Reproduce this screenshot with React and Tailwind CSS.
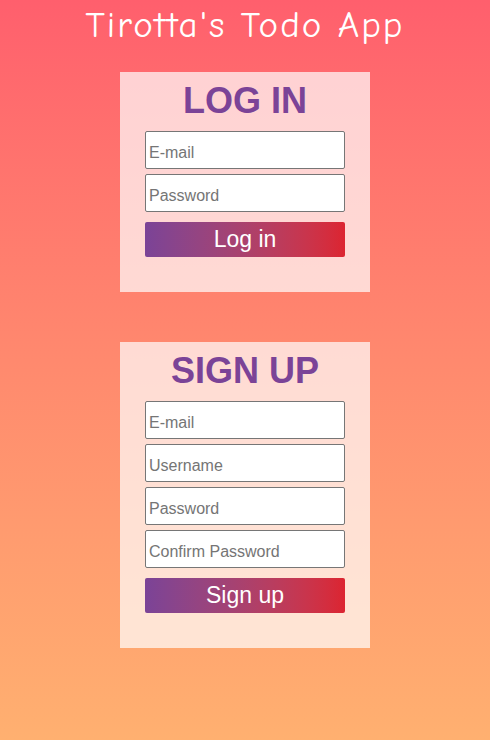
import { useState } from "react";

function Field({ placeholder, type = "text" }) {
  return (
    <input
      type={type}
      placeholder={placeholder}
      className="block h-[38px] w-full rounded-[2px] border border-[#767676] bg-white px-[3px] pt-[6px] text-[16px] text-black placeholder:text-[#757575] outline-none"
    />
  );
}

function AuthCard({ title, fields, submitLabel }) {
  return (
    <form
      onSubmit={(e) => e.preventDefault()}
      className="w-[250px] bg-white/70 pt-[8px] pb-[35px]"
    >
      <h2 className="mb-[10px] text-center text-[36px] leading-[41px] font-bold text-[#7b4397]">
        {title}
      </h2>
      <div className="mx-auto flex w-[200px] flex-col gap-[5px]">
        {fields.map((field) => (
          <Field key={field.placeholder} {...field} />
        ))}
      </div>
      <button
        type="submit"
        className="mx-auto mt-[10px] block h-[35px] w-[200px] rounded-[2px] bg-gradient-to-r from-[#7b4397] to-[#dc2430] text-[23px] leading-[35px] text-white"
      >
        {submitLabel}
      </button>
    </form>
  );
}

export default function App() {
  const [loginFields] = useState([
    { placeholder: "E-mail", type: "email" },
    { placeholder: "Password", type: "password" },
  ]);
  const [signupFields] = useState([
    { placeholder: "E-mail", type: "email" },
    { placeholder: "Username" },
    { placeholder: "Password", type: "password" },
    { placeholder: "Confirm Password", type: "password" },
  ]);

  return (
    <div className="flex min-h-[740px] flex-col items-center bg-gradient-to-b from-[#ff5f6d] via-[#ff8a6e] to-[#ffb070] font-['Liberation_Sans',Arial,sans-serif]">
      <h1 className="mb-[22px] text-center font-['Comic_Sans_MS','Comic_Neue',cursive] text-[37px] leading-[50px] tracking-[2px] text-white">
        Tirotta's Todo App
      </h1>
      <AuthCard title="LOG IN" fields={loginFields} submitLabel="Log in" />
      <div className="h-[50px]" />
      <AuthCard title="SIGN UP" fields={signupFields} submitLabel="Sign up" />
    </div>
  );
}
